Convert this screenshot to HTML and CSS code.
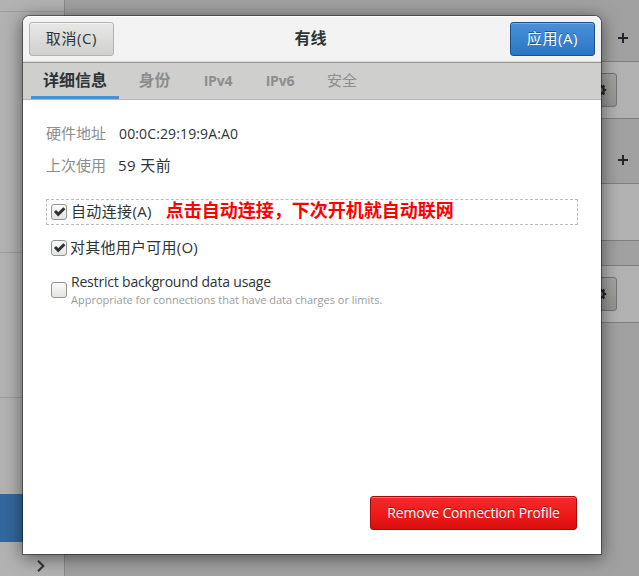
FILE: index.html
```html
<!DOCTYPE html>
<html lang="zh-CN">
<head>
<meta charset="utf-8">
<title>有线</title>
<link rel="stylesheet" href="styles.css">
</head>
<body>
<div class="desktop">
  <aside class="sidebar">
    <div class="side-top"></div>
    <div class="side-group"></div>
    <div class="side-mid"></div>
    <div class="side-gap"></div>
    <div class="side-selected"></div>
    <div class="side-more">
      <svg class="chevron" viewBox="0 0 8 12"><path d="M1 .8 6.3 6 1 11.2" fill="none" stroke="#363a3b" stroke-width="2.2"/></svg>
    </div>
  </aside>
  <main class="panel">
    <div class="band band-first"><svg class="plus" viewBox="0 0 10 10"><path d="M4 0h2v4h4v2H6v4H4V6H0V4h4z"/></svg></div>
    <div class="row"><span class="gear-button"><svg class="gear" viewBox="0 0 16 16"><circle cx="8" cy="8" r="3.8"/><path d="M8 1.8v2.5M8 11.7v2.5M1.8 8h2.5M11.7 8h2.5M3.6 3.6l2 2M10.4 10.4l2 2M12.4 3.6l-2 2M5.6 10.4l-2 2"/></svg></span></div>
    <div class="band band-second"><svg class="plus" viewBox="0 0 10 10"><path d="M4 0h2v4h4v2H6v4H4V6H0V4h4z"/></svg></div>
    <div class="row"></div>
    <div class="band band-thin"></div>
    <div class="row"><span class="gear-button"><svg class="gear" viewBox="0 0 16 16"><circle cx="8" cy="8" r="3.8"/><path d="M8 1.8v2.5M8 11.7v2.5M1.8 8h2.5M11.7 8h2.5M3.6 3.6l2 2M10.4 10.4l2 2M12.4 3.6l-2 2M5.6 10.4l-2 2"/></svg></span></div>
  </main>
</div>

<section class="dialog">
  <header class="titlebar">
    <button class="btn">取消(C)</button>
    <h1 class="title">有线</h1>
    <button class="btn btn-apply">应用(A)</button>
  </header>
  <nav class="tabs">
    <span class="tab tab-active">详细信息</span>
    <span class="tab">身份</span>
    <span class="tab tab-ip">IPv4</span>
    <span class="tab tab-ip">IPv6</span>
    <span class="tab tab-security">安全</span>
  </nav>
  <div class="content">
    <dl class="facts">
      <dt>硬件地址</dt><dd class="mac">00:0C:29:19:9A:A0</dd>
      <dt>上次使用</dt><dd class="ago">59 天前</dd>
    </dl>
    <div class="option option-focus">
      <span class="check"><svg viewBox="0 0 16 16"><path d="M4 7 7.2 10.4 13.4 4.2" /></svg></span>
      <span class="label">自动连接(A)</span>
      <strong class="note">点击自动连接，下次开机就自动联网</strong>
    </div>
    <div class="option option-users">
      <span class="check"><svg viewBox="0 0 16 16"><path d="M4 7 7.2 10.4 13.4 4.2" /></svg></span>
      <span class="label">对其他用户可用(O)</span>
    </div>
    <div class="option option-data">
      <span class="check"></span>
      <span class="stack">
        <span class="data-title">Restrict background data usage</span>
        <span class="data-hint">Appropriate for connections that have data charges or limits.</span>
      </span>
    </div>
    <button class="btn btn-remove">Remove Connection Profile</button>
  </div>
</section>
</body>
</html>
```
FILE: styles.css
```css
* { box-sizing: border-box; }

body {
  margin: 0;
  width: 639px;
  height: 576px;
  overflow: hidden;
  position: relative;
  color: #2e3436;
  font: 15px/20px "Open Sans", "Noto Sans CJK SC", sans-serif;
}

.desktop { display: flex; height: 576px; background: #a1a1a1; }

.sidebar {
  display: flex;
  flex-direction: column;
  width: 65px;
  background: #b2b2b2;
  border-right: 1px solid #8c8c8c;
}
.side-top { height: 12px; border-bottom: 1px solid #9d9d9d; }
.side-group { height: 241px; border-bottom: 1px solid #9d9d9d; }
.side-mid { height: 145px; border-bottom: 1px solid #9d9d9d; }
.side-gap { height: 96px; }
.side-selected { height: 48px; background: #34679d; }
.side-more { padding: 18px 0 0 37px; }
.chevron { display: block; width: 8px; height: 12px; }

.panel { flex: 1; }
.band {
  display: flex;
  justify-content: flex-end;
  align-items: center;
  padding-right: 11px;
  border-bottom: 1px solid #7f7f7f;
}
.band-first { height: 62px; padding-top: 15px; }
.band-second { height: 65px; padding-top: 18px; }
.band-thin { height: 25px; }
.plus { width: 10px; height: 10px; fill: #222628; }
.row {
  display: flex;
  justify-content: flex-end;
  align-items: center;
  height: 57px;
  padding-right: 22px;
  background: #b2b2b2;
  border-bottom: 1px solid #7f7f7f;
}
.gear-button {
  display: flex;
  align-items: center;
  justify-content: center;
  width: 34px;
  height: 34px;
  border: 1px solid #747474;
  border-radius: 3px;
  background: linear-gradient(#a5a5a3, #949492);
}
.gear { width: 16px; height: 16px; fill: none; stroke: #222628; stroke-width: 2.2; }

.dialog {
  position: absolute;
  left: 23px;
  top: 16px;
  width: 578px;
  height: 538px;
  display: flex;
  flex-direction: column;
  border-radius: 7px 7px 0 0;
  background: #fff;
  box-shadow: 0 0 0 1px rgba(0, 0, 0, .4), 0 3px 18px 1px rgba(0, 0, 0, .5);
}

.titlebar {
  display: flex;
  align-items: center;
  justify-content: space-between;
  height: 47px;
  padding: 0 6px;
  border-bottom: 1px solid #96968e;
  border-radius: 7px 7px 0 0;
  background: #f3f3f3;
  box-shadow: inset 0 1px #fff, inset 0 -1px #dedede;
}
.title { margin: 0; padding: 0 3px 2px 0; font-size: 16px; font-weight: 700; line-height: 20px; }

.btn {
  width: 85px;
  height: 34px;
  padding: 0 0 3px;
  border: 1px solid #b3b3b0;
  border-radius: 3px;
  background: linear-gradient(#e7e7e6, #d0d0ce);
  box-shadow: inset 0 1px #f4f4f4;
  color: #2e3436;
  font: inherit;
  letter-spacing: .6px;
  white-space: nowrap;
}
.btn-apply {
  border-color: #1c5187;
  background: linear-gradient(#4a90d9, #2a76c6);
  box-shadow: inset 0 1px #76ade4;
  color: #fff;
  text-shadow: 0 -1px rgba(0, 0, 0, .4);
}

.tabs {
  display: flex;
  height: 37px;
  padding-left: 8px;
  background: #cfcfcd;
  border-bottom: 1px solid #b6b6b3;
}
.tab {
  display: flex;
  justify-content: center;
  width: 71px;
  padding-top: 7px;
  color: #8b8e8f;
  font-size: 16px;
  font-weight: 700;
}
.tab-active { width: 88px; color: #2e3436; border-bottom: 3px solid #4a90d9; }
.tab-ip { width: 62px; padding-right: 6px; padding-top: 8px; font-size: 14px; letter-spacing: -.2px; }
.tab-security { width: 62px; padding-right: 6px; font-size: 15px; font-weight: 400; }

.content { display: flex; flex-direction: column; flex: 1; padding: 23px 23px 24px 24px; }

.facts {
  display: grid;
  grid-template-columns: 71px auto;
  grid-auto-rows: 32px;
  margin: 0 0 0 -1px;
}
.facts dt { color: #8b8e8f; }
.facts dd { margin: 0; padding-left: 1px; }
.facts .mac { padding-top: 1px; padding-left: 2px; font-size: 14px; letter-spacing: .13px; }
.facts .ago { letter-spacing: .4px; }

.option { display: flex; align-items: center; height: 26px; margin-left: -1px; padding-left: 4px; }
.option-focus { margin-top: 12px; border: 1px dashed #bbb; }
.option-users { margin-top: 10px; padding-left: 5px; }
.option-data { height: 38px; margin-top: 10px; padding-left: 5px; }
.check {
  width: 16px;
  height: 16px;
  flex: none;
  border: 1px solid #94948f;
  border-radius: 3px;
  background: linear-gradient(#fbfbfb, #e4e4e3);
}
.check svg { display: block; width: 16px; height: 16px; margin: -1px; }
.check path { fill: none; stroke: #2e3436; stroke-width: 3; }
.label { margin: -2px 0 0 4px; letter-spacing: .35px; white-space: nowrap; }
.option-users .label { margin-left: 3px; letter-spacing: .25px; }
.note {
  margin: -6px 0 0 14px;
  color: #f00;
  font: 700 18px/22px "Noto Sans CJK SC", sans-serif;
  white-space: nowrap;
}
.stack { display: flex; flex-direction: column; margin-left: 4px; white-space: nowrap; }
.data-title { font-size: 14px; letter-spacing: -.19px; line-height: 20px; }
.data-hint { color: #9a9c9c; font-size: 11px; line-height: 16px; }

.btn-remove {
  align-self: flex-end;
  width: 207px;
  margin-top: auto;
  margin-right: 1px;
  padding-bottom: 1px;
  border-color: #a40c0c;
  background: linear-gradient(#f22b2b, #ef1818 60%, #d51010);
  box-shadow: inset 0 1px #f56c6c;
  color: #fff;
  font-size: 14px;
  letter-spacing: -.17px;
  text-shadow: 0 -1px rgba(0, 0, 0, .4);
}
```
